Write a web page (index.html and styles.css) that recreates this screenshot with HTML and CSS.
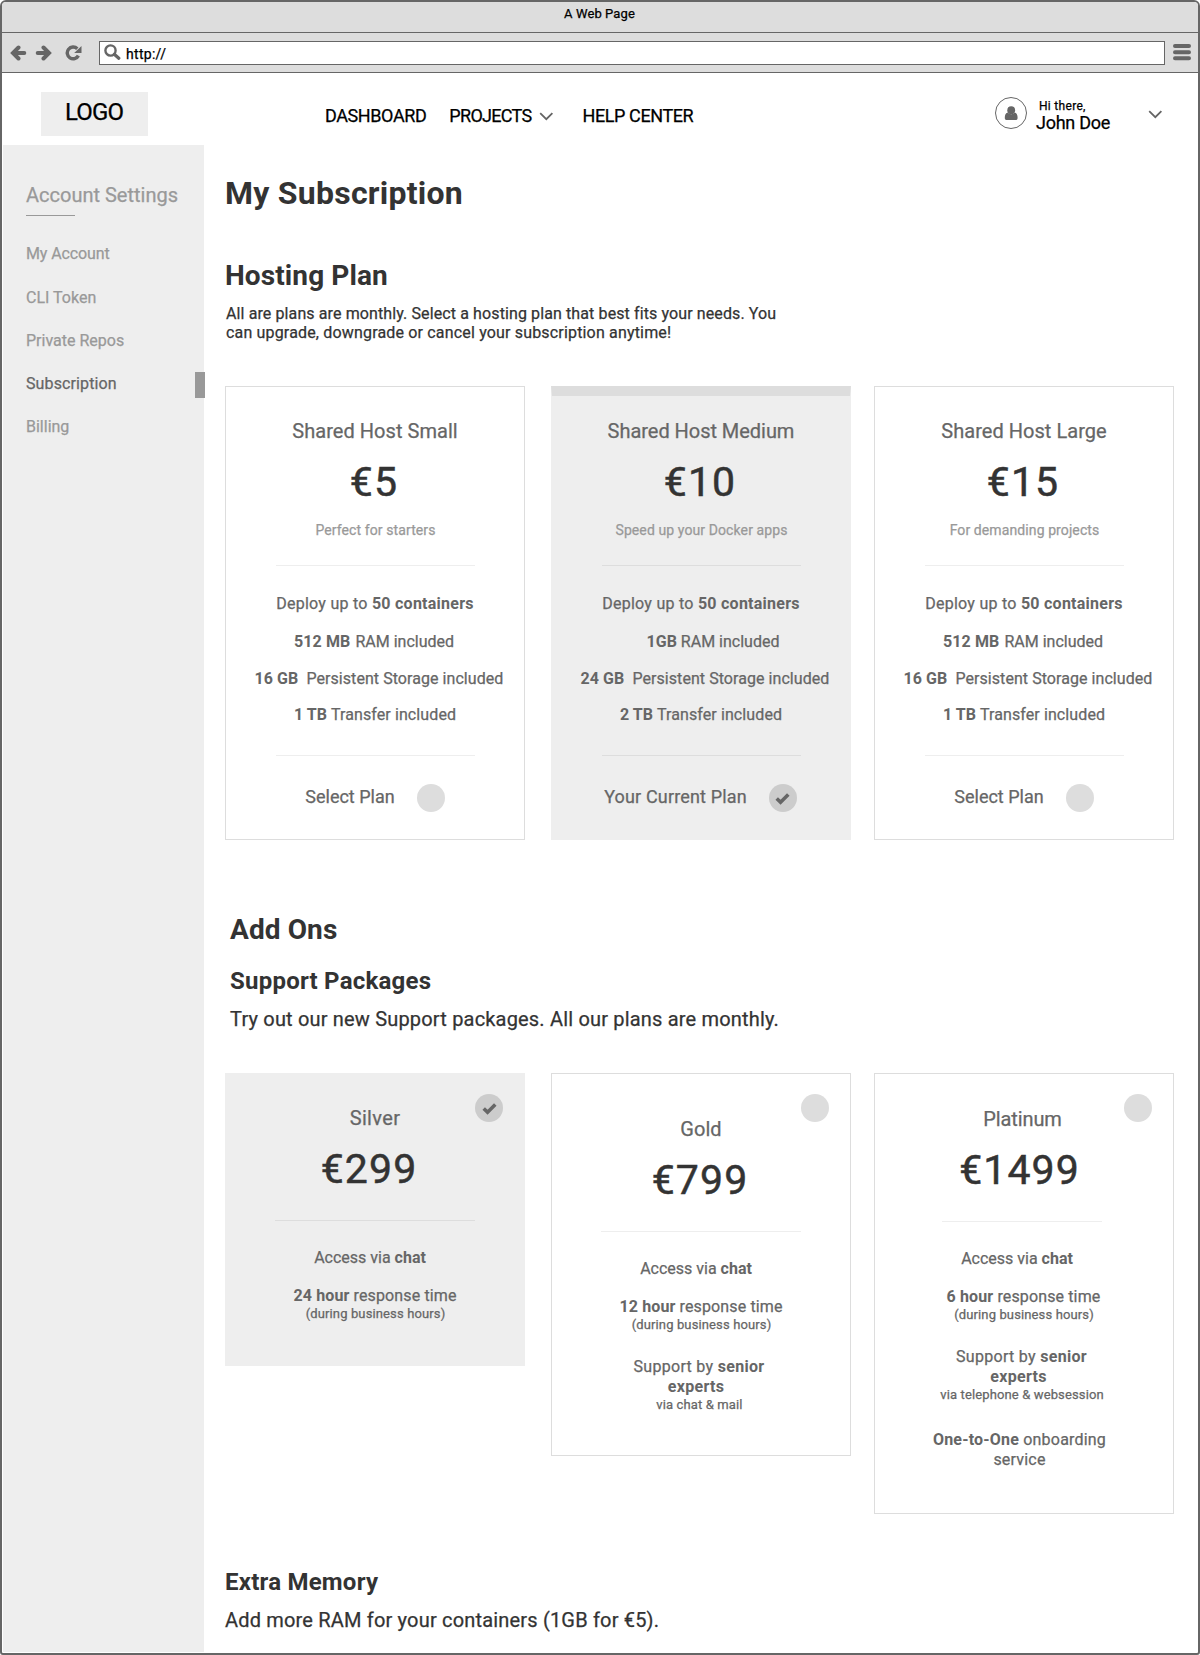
FILE: index.html
```html
<!DOCTYPE html>
<html lang="en">
<head>
<meta charset="utf-8">
<title>A Web Page</title>
<link rel="stylesheet" href="styles.css">
</head>
<body>
<div class="window">
  <div class="titlebar">A Web Page</div>
  <div class="toolbar">
    <svg class="tool-back" width="17" height="16" viewBox="0 0 17 16"><path d="M8.500 2.500L3 8l5.500 5.500M3.500 8h10.800" fill="none" stroke="#666" stroke-width="4" stroke-linecap="round" stroke-linejoin="miter"/></svg>
    <svg class="tool-forward" width="17" height="16" viewBox="0 0 17 16"><path d="M8.500 2.500L14 8l-5.500 5.500M13.500 8H2.700" fill="none" stroke="#666" stroke-width="4" stroke-linecap="round" stroke-linejoin="miter"/></svg>
    <svg class="tool-reload" width="17" height="16" viewBox="0 0 17 16"><path d="M12.300 3.700A5.900 5.900 0 1 0 13.400 10.600" fill="none" stroke="#666" stroke-width="3.400"/><path d="M16.500 1v7H9.200z" fill="#666"/></svg>
    <div class="address">
      <svg width="17" height="17" viewBox="0 0 17 17"><circle cx="6.500" cy="6.500" r="5.100" fill="none" stroke="#666" stroke-width="2.400"/><path d="M10.300 10.300l4.500 4" stroke="#666" stroke-width="3.200" stroke-linecap="round"/></svg>
      <span class="url">http://</span>
    </div>
    <svg class="tool-menu" width="18" height="17" viewBox="0 0 18 17"><path d="M2 2h14M2 8.200h14M2 14.300h14" stroke="#666" stroke-width="4" stroke-linecap="round"/></svg>
  </div>

  <header class="header">
    <div class="logo">LOGO</div>
    <nav class="nav">
      <a class="nav-dashboard">DASHBOARD</a>
      <a class="nav-projects">PROJECTS</a>
      <svg class="chevron" width="15" height="9" viewBox="0 0 15 9"><path d="M1.200 1.200l6.100 6 6.100-6" fill="none" stroke="#666" stroke-width="1.800"/></svg>
      <a class="nav-help">HELP CENTER</a>
    </nav>
    <div class="user">
      <svg class="avatar" width="32" height="32" viewBox="0 0 32 32"><circle cx="16" cy="16" r="15.500" fill="#fff" stroke="#666"/><circle cx="16.200" cy="13.200" r="3.900" fill="#666"/><path d="M12.600 15.600C10.400 16.300 9.800 18.600 9.800 21c0 1.400.8 2 2 2h8.800c1.200 0 2-.6 2-2 0-2.400-.6-4.700-2.800-5.400a5 5 0 0 1-7.200 0z" fill="#666"/></svg>
      <div class="who"><div class="hi">Hi there,</div><div class="name">John Doe</div></div>
      <svg class="chevron" width="15" height="9" viewBox="0 0 15 9"><path d="M1.200 1.200l6.100 6 6.100-6" fill="none" stroke="#666" stroke-width="1.800"/></svg>
    </div>
  </header>

  <div class="body">
    <aside class="sidebar">
      <h2 class="side-title">Account Settings</h2>
      <div class="side-rule"></div>
      <ul class="side-menu">
        <li>My Account</li>
        <li>CLI Token</li>
        <li>Private Repos</li>
        <li class="active">Subscription</li>
        <li>Billing</li>
      </ul>
    </aside>

    <main class="main">
      <h1 class="page-title">My Subscription</h1>

      <h2 class="section-title">Hosting Plan</h2>
      <p class="intro">All are plans are monthly. Select a hosting plan that best fits your needs. You<br><span class="intro-rest">can upgrade, downgrade or cancel your subscription anytime!</span></p>

      <div class="cards plans">
        <section class="card">
          <h3 class="card-title">Shared Host Small</h3>
          <div class="price">€5</div>
          <div class="tagline">Perfect for starters</div>
          <hr class="rule">
          <ul class="features">
            <li class="pull">Deploy up to <b>50 containers</b></li>
            <li class="pull"><b>512 MB</b> <span class="gap">RAM included</span></li>
            <li class="push"><b>16 GB</b>&nbsp; Persistent Storage included</li>
            <li><b>1 TB</b> Transfer included</li>
          </ul>
          <hr class="rule">
          <div class="choose"><span>Select Plan</span><i class="dot"></i></div>
        </section>

        <section class="card selected banner">
          <h3 class="card-title">Shared Host Medium</h3>
          <div class="price">€10</div>
          <div class="tagline">Speed up your Docker apps</div>
          <hr class="rule">
          <ul class="features">
            <li class="pull">Deploy up to <b>50 containers</b></li>
            <li class="push-far"><b>1GB</b> RAM included</li>
            <li class="push"><b>24 GB</b>&nbsp; Persistent Storage included</li>
            <li><b>2 TB</b> Transfer included</li>
          </ul>
          <hr class="rule">
          <div class="choose"><span>Your Current Plan</span><i class="dot on"><svg width="15" height="13" viewBox="0 0 14 12"><path d="M1.600 6l3.600 3.600 7.200-7.300" fill="none" stroke="#666" stroke-width="3.300"/></svg></i></div>
        </section>

        <section class="card">
          <h3 class="card-title">Shared Host Large</h3>
          <div class="price">€15</div>
          <div class="tagline">For demanding projects</div>
          <hr class="rule">
          <ul class="features">
            <li class="pull">Deploy up to <b>50 containers</b></li>
            <li class="pull"><b>512 MB</b> <span class="gap">RAM included</span></li>
            <li class="push"><b>16 GB</b>&nbsp; Persistent Storage included</li>
            <li><b>1 TB</b> Transfer included</li>
          </ul>
          <hr class="rule">
          <div class="choose"><span>Select Plan</span><i class="dot"></i></div>
        </section>
      </div>

      <h2 class="section-title addons">Add Ons</h2>
      <h3 class="sub-title support">Support Packages</h3>
      <p class="lead support">Try out our new Support packages. All our plans are monthly.</p>

      <div class="cards packages">
        <section class="card selected silver">
          <i class="dot on corner"><svg width="15" height="13" viewBox="0 0 14 12"><path d="M1.600 6l3.600 3.600 7.200-7.300" fill="none" stroke="#666" stroke-width="3.300"/></svg></i>
          <h3 class="card-title">Silver</h3>
          <div class="price">€299</div>
          <hr class="rule">
          <ul class="services">
            <li class="access">Access via <b>chat</b></li>
            <li><b>24 hour</b> response time<small>(during business hours)</small></li>
          </ul>
        </section>

        <section class="card gold">
          <i class="dot corner"></i>
          <h3 class="card-title">Gold</h3>
          <div class="price">€799</div>
          <hr class="rule">
          <ul class="services">
            <li class="access">Access via <b>chat</b></li>
            <li><b>12 hour</b> response time<small>(during business hours)</small></li>
            <li class="experts">Support by <b>senior<br><span>experts</span></b><small>via chat &amp; mail</small></li>
          </ul>
        </section>

        <section class="card platinum">
          <i class="dot corner"></i>
          <h3 class="card-title">Platinum</h3>
          <div class="price">€1499</div>
          <hr class="rule">
          <ul class="services">
            <li class="access">Access via <b>chat</b></li>
            <li><b>6 hour</b> response time<small>(during business hours)</small></li>
            <li class="experts">Support by <b>senior<br><span>experts</span></b><small>via telephone &amp; websession</small></li>
            <li class="onboarding"><b>One-to-One</b> onboarding<br>service</li>
          </ul>
        </section>
      </div>

      <h3 class="sub-title memory">Extra Memory</h3>
      <p class="lead">Add more RAM for your containers (1GB for €5).</p>
    </main>
  </div>
</div>
</body>
</html>
```
FILE: styles.css
```css
* { box-sizing: border-box; }

body {
  margin: 0;
  background: #fff;
  color: #333;
  font: 16px/20px Roboto, "Liberation Sans", sans-serif;
  letter-spacing: 0.1px;
  -webkit-text-stroke: 0.25px currentColor;
}

h1, h2, h3, p, ul, li { margin: 0; padding: 0; }
h1, h2, b, .sub-title { -webkit-text-stroke-width: 0; }
ul { list-style: none; }
svg { display: block; flex: none; }

.window {
  display: flex;
  flex-direction: column;
  width: 1200px;
  height: 1655px;
  border: 2px solid #666;
  border-radius: 6px 6px 3px 3px;
  overflow: hidden;
}

/* Browser chrome */
.titlebar {
  height: 31px;
  padding-right: 1px;
  border-bottom: 1px solid #666;
  background: #ddd;
  color: #000;
  font-size: 13px;
  line-height: 24px;
  text-align: center;
}

.toolbar {
  display: flex;
  align-items: center;
  height: 40px;
  padding: 0 7px 0 8px;
  border-bottom: 1px solid #666;
  background: #ddd;
}

.tool-forward { margin-left: 8px; }
.tool-reload { margin-left: 13px; }
.tool-menu { margin-left: 8px; }

.address {
  display: flex;
  align-items: center;
  flex: 1;
  height: 24px;
  margin-left: 17px;
  padding-left: 4px;
  border: 1px solid #666;
  background: #fff;
}

.url {
  margin: 2px 0 0 5px;
  color: #000;
  font-size: 14px;
  letter-spacing: 0.3px;
}

/* Site header */
.header {
  display: flex;
  flex: none;
  height: 72px;
  color: #000;
}

.logo {
  width: 107px;
  height: 44px;
  margin: 19px 0 0 39px;
  padding-right: 1px;
  background: #eee;
  font-size: 24px;
  line-height: 41px;
  letter-spacing: -0.85px;
  text-align: center;
}

.nav {
  display: flex;
  align-items: flex-start;
  margin: 32px 0 0 177px;
  font-size: 18px;
  line-height: 22px;
  letter-spacing: -0.4px;
}

.nav-projects { margin-left: 23px; letter-spacing: -0.7px; }
.nav .chevron { margin: 7px 0 0 7px; }
.nav-help { margin-left: 29px; }

.user {
  display: flex;
  align-items: flex-start;
  margin: 24px 35px 0 auto;
}

.who { margin: 1px 0 0 9px; width: 80px; }
.hi { padding-left: 3px; font-size: 12px; line-height: 16px; letter-spacing: 0.3px; }
.name { font-size: 18px; line-height: 18px; letter-spacing: -0.25px; }
.user .chevron { margin: 13px 0 0 32px; }

/* Page body */
.body { display: flex; flex: 1; }

.sidebar {
  width: 201px;
  margin: 0 0 1px 1px;
  padding: 38px 0 0 23px;
  background: #eee;
  color: #999;
}

.side-title { font-size: 20px; font-weight: 400; line-height: 24px; letter-spacing: 0; -webkit-text-stroke-width: 0.25px; }
.side-rule { width: 49px; height: 1px; margin-top: 8px; background: #999; }
.side-menu { margin-top: 22px; letter-spacing: 0; }
.side-menu li { height: 43px; padding-top: 6px; }
.side-menu li:first-child { letter-spacing: -0.1px; }
.side-menu li:nth-child(2) { height: 44px; padding-top: 7px; }

.side-menu .active {
  position: relative;
  color: #666;
  letter-spacing: 0.12px;
}

.side-menu .active::after {
  content: "";
  position: absolute;
  top: 4px;
  right: -1px;
  width: 10px;
  height: 26px;
  background: #999;
}

.main { width: 994px; padding: 29px 0 0 21px; }
.page-title { font-size: 32px; line-height: 38px; letter-spacing: 0.25px; }
.section-title { margin-top: 47px; font-size: 28px; line-height: 33px; }
.section-title.addons { margin-top: 73px; padding-left: 5px; }
.intro { margin-top: 12px; padding-left: 1px; line-height: 19px; letter-spacing: 0.11px; }
.intro-rest { letter-spacing: 0.17px; }
.sub-title { font-size: 24px; line-height: 28px; letter-spacing: 0.23px; }
.support { padding-left: 5px; }
.sub-title.support { margin-top: 21px; }
.sub-title.memory { margin-top: 54px; }
.lead { margin-top: 12px; font-size: 20px; line-height: 24px; letter-spacing: 0.18px; }

/* Cards */
.cards {
  display: grid;
  grid-template-columns: 300px 300px 300px;
  column-gap: 26px;
  align-items: start;
}

.cards .card:last-child { margin-left: -3px; margin-right: 3px; }
.plans { margin-top: 44px; }
.packages { margin-top: 42px; }

.card {
  position: relative;
  height: 454px;
  padding-top: 32px;
  border: 1px solid #ddd;
  background: #fff;
  color: #666;
  text-align: center;
}

.card.selected { border-color: #eee; background: #eee; }
.card.banner { border-top: 10px solid #ddd; padding-top: 23px; }
.silver { height: 293px; }
.gold { height: 383px; padding-top: 43px; }
.platinum { height: 441px; padding-top: 33px; }

.card-title { font-size: 20px; font-weight: 400; line-height: 24px; letter-spacing: 0.04px; }
.banner .card-title { letter-spacing: -0.04px; }
.price {
  margin-top: 15px;
  padding-right: 2px;
  color: #333;
  font-size: 41px;
  line-height: 48px;
  letter-spacing: 1.1px;
  -webkit-text-stroke-width: 0.5px;
}
.tagline { margin-top: 15px; padding-left: 1px; color: #999; font-size: 14px; line-height: 18px; }

.rule {
  width: 199px;
  height: 1px;
  margin: 26px auto 0;
  border: 0;
  background: #eee;
}
.selected .rule { background: #ddd; }
.packages .rule { width: 200px; margin-top: 27px; }
.packages .platinum .rule { width: 160px; margin-left: 67px; }

.features { margin-top: 28px; }
.features li:nth-child(2) { margin-top: 18px; }
.features li:nth-child(3) { margin-top: 17px; letter-spacing: 0.06px; }
.features li:nth-child(4) { margin-top: 16px; }
.features + .rule { margin-top: 30px; }

.features li.pull:first-child { margin-right: 0; letter-spacing: 0.26px; }
.features .pull { margin-right: 2px; }
.features .push { margin-left: 8px; }
.features .push-far { margin-left: 24px; letter-spacing: 0; }
.gap { margin-left: 1px; letter-spacing: 0; }

.choose {
  display: flex;
  justify-content: center;
  gap: 22px;
  margin-top: 28px;
  font-size: 18px;
  line-height: 26px;
  letter-spacing: 0;
}
.banner .choose { letter-spacing: 0.15px; padding-right: 1px; }

.dot {
  display: flex;
  align-items: center;
  justify-content: center;
  width: 28px;
  height: 28px;
  border-radius: 50%;
  background: #ddd;
}
.dot.on { background: #ccc; }
.dot.corner { position: absolute; top: 20px; right: 21px; }

/* Support packages */
.services { margin-top: 27px; }
.services li { letter-spacing: 0.13px; }
.services li + li { margin-top: 18px; }
.services li.experts { margin-top: 24px; padding-right: 4px; letter-spacing: 0.3px; }
.services li.onboarding { margin-top: 27px; padding-right: 8px; letter-spacing: 0.2px; }
.services li.access { padding-right: 10px; letter-spacing: 0; }
.services small { display: block; padding-left: 1px; font-size: 13px; line-height: 16px; letter-spacing: 0.13px; }
.experts span { margin-right: 6px; }

.silver .price { padding-right: 12px; }
.silver .card-title { letter-spacing: 0.35px; }
.platinum .card-title { padding-right: 3px; letter-spacing: -0.1px; }
.platinum .price { padding-right: 9px; }
.platinum .services { padding-right: 1px; }
.platinum .services .access { padding-right: 13px; }
```
